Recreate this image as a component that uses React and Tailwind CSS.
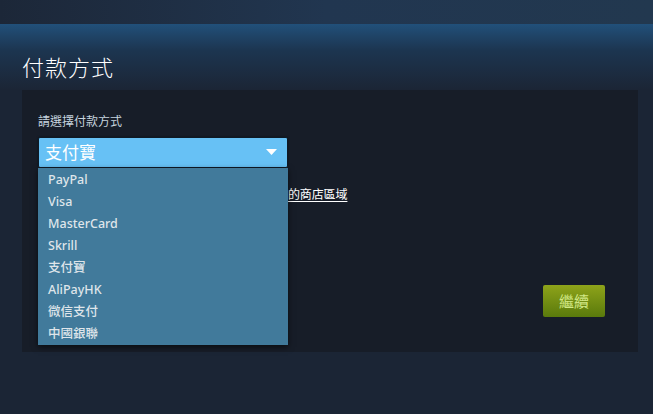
import React from 'react';

const methods = ['PayPal', 'Visa', 'MasterCard', 'Skrill', '支付寶', 'AliPayHK', '微信支付', '中國銀聯'];

const App = () => {
  return (
    <div
      className="relative h-[414px] w-[653px] overflow-hidden bg-[#1b2535] text-[#c6d4df]"
      style={{ fontFamily: '"Noto Sans", "Noto Sans CJK TC", Arial, sans-serif' }}
    >
      <div className="h-[24px] bg-gradient-to-r from-[#1c2738] via-[#213650] to-[#22384f]" />
      <div className="bg-gradient-to-b from-[#21507a] via-[#1c3550] via-40% to-[#1b2535] pb-[8px] pt-[28px]">
        <h1 className="pl-[22px] text-[22px] font-light leading-[30px] tracking-[1px] text-white">付款方式</h1>
      </div>

      <div className="ml-[22px] mr-[15px] h-[262px] bg-[#171d28] px-[16px] pt-[24px]">
        <p className="text-[12px] leading-[16px] text-[#c6d4df]">請選擇付款方式</p>

        <div className="relative mt-[7px] w-[250px]">
          <div className="flex h-[31px] items-center justify-between rounded-[2px] border border-[#0e1a26] bg-[#67c1f5] pl-[6px] pr-[10px] shadow-[0_0_2px_rgba(0,0,0,0.5)]">
            <span className="text-[17px] leading-none text-white">支付寶</span>
            <svg width="11" height="7" viewBox="0 0 11 7">
              <path d="M0 0 H11 L5.5 6 Z" fill="#ffffff" />
            </svg>
          </div>
          <ul className="absolute left-0 top-[31px] z-10 w-[250px] bg-[#417a9b] pt-[1px] shadow-[0_2px_6px_rgba(0,0,0,0.6)]">
            {methods.map((m) => (
              <li key={m} className="h-[22px] pl-[10px] text-[12.5px] font-medium leading-[22px] text-[#dfe5ea]">
                {m}
              </li>
            ))}
          </ul>
        </div>

        <p className="mt-[19px] whitespace-nowrap text-[12px] leading-[16px] tracking-[-0.1px] text-[#c6d4df]">
          若要使用其他付款方式，請前往帳戶設定變更
          <span className="text-white underline underline-offset-2">您的商店區域</span>
        </p>

        <div className="mt-[82px] flex justify-end pr-[17px]">
          <button className="h-[32px] w-[62px] rounded-[2px] bg-gradient-to-b from-[#8ea31a] to-[#5a7a0c] text-[15px] text-[#d2e885]">
            繼續
          </button>
        </div>
      </div>
    </div>
  );
};

export default App;
